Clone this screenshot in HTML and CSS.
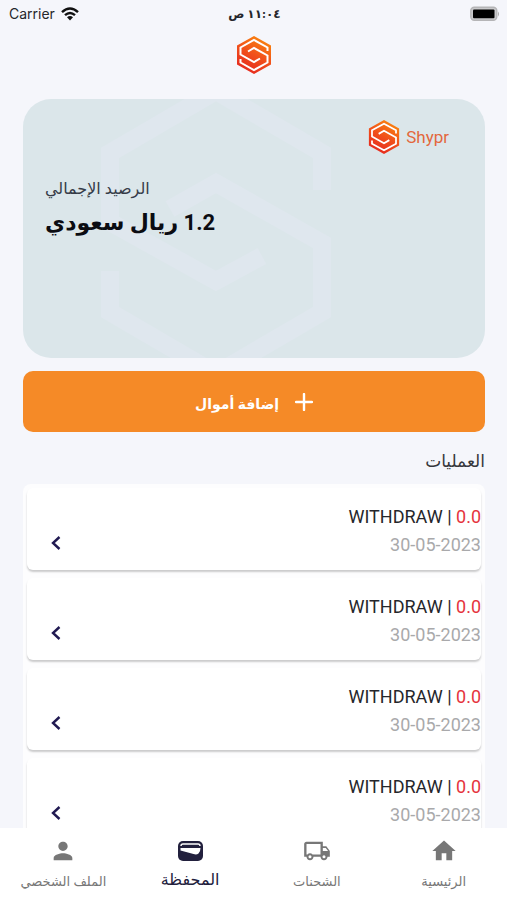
FILE: index.html
```html
<!DOCTYPE html>
<html lang="ar" dir="rtl">
<head>
<meta charset="utf-8">
<meta name="viewport" content="width=device-width, initial-scale=1">
<title>المحفظة</title>
<link rel="stylesheet" href="styles.css">
</head>
<body>
<svg class="defs" aria-hidden="true">
  <defs>
    <linearGradient id="flame" x1="0.8" y1="0" x2="0.3" y2="1">
      <stop offset="0" stop-color="#fa8a0c"/>
      <stop offset="0.5" stop-color="#f1511b"/>
      <stop offset="1" stop-color="#e5271f"/>
    </linearGradient>
    <symbol id="logo" viewBox="0 0 36 40">
      <path fill="url(#flame)" d="M18 1 35 10.500V29.500L18 39 1 29.500V10.500Z"/>
      <g fill="none" stroke="#fff" stroke-width="2">
        <path d="M31.500 16V12.500L18 5 4.500 12.500V19.500L18 27 24 23.500"/>
        <path d="M4.500 24V27.500L18 35 31.500 27.500V20.500L18 13 12 16.500"/>
      </g>
    </symbol>
  </defs>
</svg>
<div class="app">
  <header class="status" dir="ltr">
    <div class="carrier">Carrier
      <svg width="18" height="14" viewBox="0 0 18 14" aria-hidden="true"><g fill="none" stroke="#111" stroke-width="2.400"><path d="M1 5.200Q9-2.400 17 5.200"/><path d="M4 8.200Q9 3.600 14 8.200"/></g><path fill="#111" d="M6 10.300Q9 7.800 12 10.300L9 13.500Z"/></svg>
    </div>
    <div class="clock" dir="rtl">١١:٠٤ ص</div>
    <div class="battery"><svg width="30" height="16" viewBox="0 0 30 16" aria-hidden="true"><rect x="0.800" y="1.300" width="26" height="13" rx="3.500" fill="#c9c9cb" stroke="#b5b5b7" stroke-width="1.400"/><rect x="3" y="3.500" width="21.500" height="8.800" rx="1" fill="#000"/><path d="M28 5.500Q30 8 28 10.500Z" fill="#aaa"/></svg></div>
  </header>
  <div class="brand"><svg width="36" height="40" role="img" aria-label="Shypr"><use href="#logo"/></svg></div>
  <main class="content">
    <section class="card">
      <svg class="watermark" viewBox="0 0 462 259" preserveAspectRatio="xMidYMid slice" aria-hidden="true"><g fill="none" stroke="#dfe7ee" stroke-width="18"><path d="M299 91V54L193-8 87 54V123L193 182 239 157"/><path d="M87 172V213L193 275 299 213V144L193 84 147 110"/></g></svg>
      <div class="card-brand" dir="ltr"><svg width="32" height="36" aria-hidden="true"><use href="#logo"/></svg><span>Shypr</span></div>
      <div class="balance"><p class="balance-label">الرصيد الإجمالي</p><p class="balance-value">1.2 ريال سعودي</p></div>
    </section>
    <button class="add" type="button"><svg width="18" height="18" viewBox="0 0 18 18" aria-hidden="true"><path d="M9 1V17M1 9H17" stroke="#fff" stroke-width="2.400" stroke-linecap="round"/></svg><span>إضافة أموال</span></button>
    <h2 class="heading">العمليات</h2>
    <ul class="list">
      <li class="item"><div><p class="kind" dir="ltr">WITHDRAW | <b>0.0</b></p><p class="date" dir="ltr">30-05-2023</p></div><svg class="chevron" width="10" height="16" viewBox="0 0 10 16" aria-hidden="true"><path d="M8.500 2 2 8 8.500 14"/></svg></li>
      <li class="item"><div><p class="kind" dir="ltr">WITHDRAW | <b>0.0</b></p><p class="date" dir="ltr">30-05-2023</p></div><svg class="chevron" width="10" height="16" viewBox="0 0 10 16" aria-hidden="true"><path d="M8.500 2 2 8 8.500 14"/></svg></li>
      <li class="item"><div><p class="kind" dir="ltr">WITHDRAW | <b>0.0</b></p><p class="date" dir="ltr">30-05-2023</p></div><svg class="chevron" width="10" height="16" viewBox="0 0 10 16" aria-hidden="true"><path d="M8.500 2 2 8 8.500 14"/></svg></li>
      <li class="item"><div><p class="kind" dir="ltr">WITHDRAW | <b>0.0</b></p><p class="date" dir="ltr">30-05-2023</p></div><svg class="chevron" width="10" height="16" viewBox="0 0 10 16" aria-hidden="true"><path d="M8.500 2 2 8 8.500 14"/></svg></li>
    </ul>
  </main>
  <nav class="tabs">
    <a class="tab" href="#"><svg width="28" height="28" viewBox="0 0 24 24" aria-hidden="true"><path fill="currentColor" d="M10 20v-6h4v6h5v-8h3L12 3 2 12h3v8z"/></svg><span>الرئيسية</span></a>
    <a class="tab" href="#"><svg width="28" height="28" viewBox="0 0 24 24" aria-hidden="true"><path fill="currentColor" fill-rule="evenodd" d="M20 8h-3V4H3c-1.100 0-2 .9-2 2v11h2c0 1.660 1.340 3 3 3s3-1.340 3-3h6c0 1.660 1.340 3 3 3s3-1.340 3-3h2v-5l-3-4zM19.500 9.500l1.960 2.500H17V9.500h2.500zM6 18.300a1.300 1.300 0 1 1 0-2.600 1.300 1.300 0 0 1 0 2.600zM8.220 15A3 3 0 0 0 6 14c-.89 0-1.670.39-2.220 1H3V6h12v9H8.220zM18 18.300a1.300 1.300 0 1 1 0-2.600 1.300 1.300 0 0 1 0 2.600z"/></svg><span>الشحنات</span></a>
    <a class="tab active" href="#" aria-current="page"><svg width="28" height="28" viewBox="0 0 28 28" aria-hidden="true"><rect x="2" y="4" width="25" height="20" rx="5" fill="#22203d"/><path fill="none" stroke="#fff" stroke-width="1.400" d="M5 9Q5 7 7 7H22Q24 7 24 9"/><path fill="#fff" d="M4.500 11H24.500Q24.500 14.500 22.500 16.500Q20.500 18 17.500 17L4.500 13.500Z"/></svg><span>المحفظة</span></a>
    <a class="tab" href="#"><svg width="28" height="28" viewBox="0 0 24 24" aria-hidden="true"><path fill="currentColor" d="M12 12c2.210 0 4-1.790 4-4s-1.790-4-4-4-4 1.790-4 4 1.790 4 4 4zm0 2c-2.670 0-8 1.340-8 4v2h16v-2c0-2.660-5.330-4-8-4z"/></svg><span>الملف الشخصي</span></a>
  </nav>
</div>
</body>
</html>
```
FILE: styles.css
```css
* { box-sizing: border-box; }
body { margin: 0; background: #f5f6fb; color: #25262b; font-family: Roboto, "DejaVu Sans", sans-serif; }
p, h2, ul { margin: 0; padding: 0; }
.defs { position: absolute; width: 0; height: 0; }
.app { height: 100vh; display: flex; flex-direction: column; overflow: hidden; }
.status { display: grid; grid-template-columns: 1fr auto 1fr; align-items: center; height: 28px; padding: 0 7px 0 9px; font: 14px/20px Inter, "DejaVu Sans", sans-serif; }
.carrier { display: flex; align-items: center; gap: 6px; }
.clock { font-size: 12px; font-weight: 700; }
.battery { display: flex; justify-content: flex-end; }
.brand { display: flex; justify-content: center; padding: 7px 0 24px; }
.brand svg, .card-brand svg { display: block; }
.content { flex: 1; min-height: 0; overflow: hidden; padding: 0 22px 0 23px; display: flex; flex-direction: column; }
.card { position: relative; flex: none; height: 259px; border-radius: 28px; overflow: hidden; background: #dbe6ea; padding: 20px 36px 0 22px; display: flex; flex-direction: column; gap: 20px; }
.watermark { position: absolute; inset: 0; width: 100%; height: 100%; }
.card-brand, .balance { position: relative; }
.card-brand { align-self: flex-start; display: flex; align-items: center; gap: 6px; color: #e3683c; font-size: 17px; }
.balance { text-align: left; }
.balance-label { font-size: 16px; line-height: 28px; color: #363c48; }
.balance-value { font-size: 22px; line-height: 40px; font-weight: 700; color: #0b0c12; }
.add { flex: none; width: 100%; height: 61px; margin-top: 13px; border: 0; border-radius: 10px; background: #f58a27; color: #fff; display: flex; align-items: center; justify-content: center; gap: 16px; font: 700 14px/24px Roboto, "DejaVu Sans", sans-serif; }
.add span { padding-top: 4px; }
.heading { flex: none; margin: 16px 0 10px; font-size: 17px; line-height: 26px; font-weight: 400; color: #36373b; }
.list { list-style: none; flex: none; padding: 4px; background: #fdfdfe; border-radius: 8px; display: grid; gap: 8px; }
.item { height: 82px; padding: 15px 0 0 24px; background: #fff; border-radius: 6px; box-shadow: 0 2px 2px rgba(0, 0, 0, 0.2); display: flex; align-items: flex-start; justify-content: space-between; }
.kind, .date { font-size: 18px; line-height: 28px; text-align: right; }
.kind b { font-weight: 400; color: #e5343d; }
.date { color: #a9a9ab; }
.chevron { margin-top: 32px; fill: none; stroke: #211a52; stroke-width: 2.4; }
.tabs { flex: none; height: 72px; background: #fff; display: grid; grid-template-columns: repeat(4, 1fr); }
.tab { display: flex; flex-direction: column; align-items: center; gap: 7px; padding-top: 9px; color: #777; text-decoration: none; font-size: 13px; line-height: 20px; white-space: nowrap; }
.active { gap: 5px; color: #22203d; font-size: 16px; }
```
